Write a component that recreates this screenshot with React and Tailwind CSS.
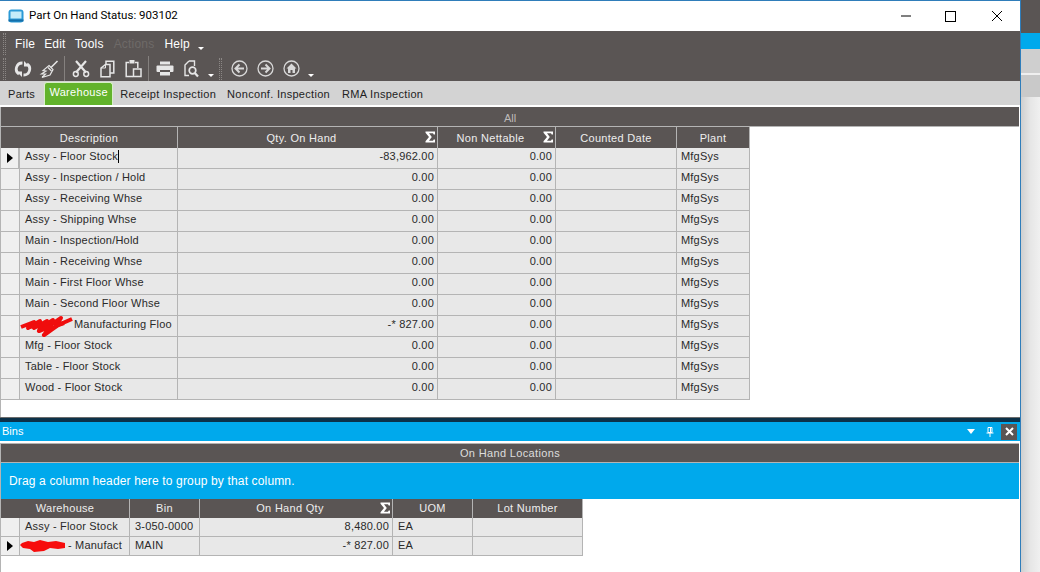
import React from "react";

const rows = [
  ["Assy - Floor Stock", "-83,962.00", true],
  ["Assy - Inspection / Hold", "0.00"],
  ["Assy - Receiving Whse", "0.00"],
  ["Assy - Shipping Whse", "0.00"],
  ["Main - Inspection/Hold", "0.00"],
  ["Main - Receiving Whse", "0.00"],
  ["Main - First Floor Whse", "0.00"],
  ["Main - Second Floor Whse", "0.00"],
  ["Manufacturing Floo", "-* 827.00", false, true],
  ["Mfg - Floor Stock", "0.00"],
  ["Table - Floor Stock", "0.00"],
  ["Wood - Floor Stock", "0.00"],
];

function Sigma() {
  return (
    <svg width="11" height="12" viewBox="0 0 11 12" className="block">
      <path d="M.5 .5H10V3.5H8.7L8 2.2H4L6.8 6L4 9.8H8L8.7 8.4H10V11.5H.5V10.3L4 6L.5 1.7Z" fill="#fff" />
    </svg>
  );
}

function Pointer() {
  return (
    <svg width="6" height="10" viewBox="0 0 6 10">
      <path d="M0 0L6 5L0 10Z" fill="#000" />
    </svg>
  );
}

function ScribbleWide() {
  return (
    <svg width="53" height="22" viewBox="0 0 53 22" className="block shrink-0">
      <path d="M1 12L14 7L8 13L20 6L14 13L27 6L22 12L33 5L28 12L41 3L36 11L52 4" fill="none" stroke="#f00d0d" strokeWidth="4" strokeLinejoin="round" />
      <path d="M8 12L21 10L19 16L31 11L24 20L38 10L44 8" fill="none" stroke="#f00d0d" strokeWidth="4.2" strokeLinejoin="round" />
    </svg>
  );
}

function ScribbleBlob() {
  return (
    <svg width="46" height="15" viewBox="0 0 46 15" className="block shrink-0">
      <path d="M2 5L8 3L14 4L20 2L28 4L36 3L45 5L45 10L38 11L30 10L24 13L14 14L10 11L3 10L0 7Z" fill="#f70c0c" />
    </svg>
  );
}

function HeaderCell({ w, children, sigma, sigmaTop = "top-[4px]", first }) {
  return (
    <div className={`relative flex h-full shrink-0 items-center justify-center border-r border-[#b4b4b4] ${w} ${sigma ? "pr-[12px]" : ""} ${first ? "pt-[2px]" : ""}`}>
      <span>{children}</span>
      {sigma && <span className={`absolute right-[1px] ${sigmaTop}`}><Sigma /></span>}
    </div>
  );
}

function ToolIcon({ children }) {
  return <span className="flex w-[26px] justify-center">{children}</span>;
}

function Caret({ mt, ml }) {
  return (
    <svg width="6" height="3" viewBox="0 0 6 3" className={`block shrink-0 ${mt} ${ml}`}>
      <path d="M0 0H6L3 3Z" fill="#fff" />
    </svg>
  );
}

function Grip({ className = "mr-[3px]" }) {
  return <span className={`h-[22px] w-[3px] shrink-0 border-x border-dotted border-[#8b8785] ${className}`} />;
}

function Divider() {
  return <span className="ml-[2px] mr-[3px] h-[26px] w-px shrink-0 bg-[#85817f]" />;
}

const C = "#e6e6e6";

function IconRefresh() {
  return (
    <svg width="18" height="18" viewBox="0 0 18 18" fill="none">
      <path d="M8.5 3A6 6 0 0 0 5 14" stroke={C} strokeWidth="2.8" />
      <path d="M9.5 15A6 6 0 0 0 13 4" stroke={C} strokeWidth="2.8" />
      <path d="M2.5 11.5H8V17Z" fill={C} />
      <path d="M15.5 6.5H10V1Z" fill={C} />
    </svg>
  );
}
function IconBroom() {
  return (
    <svg width="20" height="20" viewBox="0 0 20 20" fill="none" stroke={C} strokeWidth="1.2">
      <path d="M18.5 2L12 8.5" strokeWidth="1.6" />
      <path d="M10 6.5L14 10.5L11 16L3 18.5L6.5 15L2.5 15L7 12L4 11.5Z" />
      <path d="M9 8.5L12.5 12" />
    </svg>
  );
}
function IconScissors() {
  return (
    <svg width="18" height="18" viewBox="0 0 18 18" fill="none" stroke={C}>
      <path d="M4 1L14 12.5M14 1L4 12.5" strokeWidth="2.2" />
      <circle cx="3.8" cy="14" r="2.4" strokeWidth="1.5" />
      <circle cx="14.2" cy="14" r="2.4" strokeWidth="1.5" />
    </svg>
  );
}
function IconCopy() {
  return (
    <svg width="15" height="18" viewBox="0 0 15 18" fill="none" stroke={C} strokeWidth="1.5">
      <path d="M6 4.5V1.2H13.8V13H10" />
      <path d="M1 8L5.5 4.5H10V16.8H1Z" />
      <path d="M5.5 4.5V8H1" strokeWidth="1" />
    </svg>
  );
}
function IconPaste() {
  return (
    <svg width="17" height="19" viewBox="0 0 17 19" fill="none" stroke={C} strokeWidth="1.5">
      <path d="M4 3.5H1.2V17.5H8" />
      <path d="M10 3.5H12.8V9" />
      <rect x="4.5" y="1" width="5" height="3.5" fill={C} stroke="none" />
      <rect x="8.5" y="10" width="7.5" height="7.5" />
    </svg>
  );
}
function IconPrinter() {
  return (
    <svg width="18" height="15" viewBox="0 0 18 15">
      <rect x="4" y="0.5" width="10" height="3" fill={C} />
      <rect x="0.5" y="4.5" width="17" height="6.5" rx="1" fill={C} />
      <rect x="4" y="9" width="10" height="2" fill="#5a5554" />
      <rect x="4" y="11" width="10" height="3.5" fill={C} />
    </svg>
  );
}
function IconPreview() {
  return (
    <svg width="15" height="18" viewBox="0 0 15 18" fill="none" stroke={C}>
      <path d="M5 1H10.5V6M5 1L1 5V15.5H5" strokeWidth="1.4" />
      <circle cx="8.5" cy="10.5" r="3.3" strokeWidth="1.7" />
      <path d="M10.8 13L14 16.5" strokeWidth="2.2" />
    </svg>
  );
}
function IconBack() {
  return (
    <svg width="17" height="17" viewBox="0 0 17 17" fill="none" stroke="#d8d8d8">
      <circle cx="8.5" cy="8.5" r="7.5" strokeWidth="1.3" />
      <path d="M13 8.5H5M8.5 4.5L4.5 8.5L8.5 12.5" strokeWidth="2" />
    </svg>
  );
}
function IconForward() {
  return (
    <svg width="17" height="17" viewBox="0 0 17 17" fill="none" stroke="#d8d8d8">
      <circle cx="8.5" cy="8.5" r="7.5" strokeWidth="1.3" />
      <path d="M4 8.5H12M8.5 4.5L12.5 8.5L8.5 12.5" strokeWidth="2" />
    </svg>
  );
}
function IconHome() {
  return (
    <svg width="17" height="17" viewBox="0 0 17 17">
      <circle cx="8.5" cy="8.5" r="7.5" fill="none" stroke="#d8d8d8" strokeWidth="1.3" />
      <path d="M8.5 3.5L13.5 8.5H12V13H5V8.5H3.5Z" fill="#d8d8d8" />
      <rect x="7.5" y="10" width="2" height="3" fill="#5a5554" />
    </svg>
  );
}

export default function App() {
  return (
    <div className="flex h-[572px] w-[1040px] overflow-hidden bg-white font-['Liberation_Sans',Arial,sans-serif] text-[11px] text-[#2a2a2a]">
      <div className="flex h-full w-[1021px] shrink-0 flex-col border-r border-t border-[#2f7dba]">
        <div className="flex h-[30px] shrink-0 items-center bg-white pl-[8px]">
          <svg width="16" height="14" viewBox="0 0 16 14">
            <rect x="0.5" y="0.5" width="15" height="13" rx="3" fill="#2b9ad6" />
            <rect x="2.5" y="2.5" width="11" height="7" fill="#c4ecf9" />
            <rect x="0.5" y="10.5" width="15" height="2" fill="#156fa9" />
          </svg>
          <span className="ml-[5px] font-['Roboto',sans-serif] text-[11.5px] text-black">Part On Hand Status: 903102</span>
          <div className="ml-auto flex items-center">
            <svg width="12" height="12" viewBox="0 0 12 12" className="mr-[33px]"><path d="M1 6H11" stroke="#000" /></svg>
            <svg width="11" height="11" viewBox="0 0 11 11" className="mr-[35px]"><rect x="0.5" y="0.5" width="10" height="10" fill="none" stroke="#000" /></svg>
            <svg width="12" height="12" viewBox="0 0 12 12" className="mr-[17px]"><path d="M1 1L11 11M11 1L1 11" stroke="#000" /></svg>
          </div>
        </div>

        <div className="h-[50px] shrink-0 bg-[#5a5554]">
          <div className="flex h-[25px] items-center pl-[3px] pt-[1px] text-[12px] tracking-[0.2px] text-white">
            <Grip />
            <span className="ml-[6px]">File</span>
            <span className="ml-[9px]">Edit</span>
            <span className="ml-[9px]">Tools</span>
            <span className="ml-[10px] text-[#6e6a68]">Actions</span>
            <span className="ml-[10px]">Help</span>
            <Caret mt="mt-[9px]" ml="ml-[8px]" />
          </div>
          <div className="flex h-[25px] items-center pl-[3px]">
            <Grip />
            <div className="ml-[1px] flex items-center">
              <ToolIcon><IconRefresh /></ToolIcon>
              <ToolIcon><IconBroom /></ToolIcon>
            </div>
            <Divider />
            <ToolIcon><IconScissors /></ToolIcon>
            <ToolIcon><IconCopy /></ToolIcon>
            <ToolIcon><IconPaste /></ToolIcon>
            <Divider />
            <ToolIcon><IconPrinter /></ToolIcon>
            <ToolIcon><IconPreview /></ToolIcon>
            <Caret mt="mt-[13px]" ml="ml-[4px]" />
            <Grip className="ml-[5px] mr-[4px]" />
            <ToolIcon><IconBack /></ToolIcon>
            <ToolIcon><IconForward /></ToolIcon>
            <ToolIcon><IconHome /></ToolIcon>
            <Caret mt="mt-[13px]" ml="ml-[4px]" />
          </div>
        </div>

        <div className="flex h-[24px] shrink-0 items-center bg-[#d3d3d3] tracking-[0.3px] text-[#222]">
          <span className="ml-[8px] pt-[3px]">Parts</span>
          <span className="ml-[9px] mt-[1px] flex h-[23px] w-[69px] items-center justify-center rounded-t-[3px] border border-b-0 border-[#d8efc9] bg-[#62b32b] pb-[3px] text-white">Warehouse</span>
          <span className="ml-[7px] pt-[3px]">Receipt Inspection</span>
          <span className="ml-[11px] pt-[3px]">Nonconf. Inspection</span>
          <span className="ml-[12px] pt-[3px]">RMA Inspection</span>
        </div>

        <div className="h-[2px] shrink-0 bg-white" />

        <div className="flex min-h-0 flex-1 flex-col border-l border-[#b4b4b4]">
          <div className="mr-[1px] flex h-[20px] shrink-0 items-center justify-center border-b border-[#b4b4b4] bg-[#5a5554] pt-[3px] text-[#bdbab9]">All</div>
          <div className="w-[749px] tracking-[0.2px]">
            <div className="flex h-[21px] bg-[#5a5554] tracking-[0.3px] text-[#eee]">
              <HeaderCell w="w-[177px]" first>Description</HeaderCell>
              <HeaderCell w="w-[260px]" sigma first>Qty. On Hand</HeaderCell>
              <HeaderCell w="w-[118px]" sigma first>Non Nettable</HeaderCell>
              <HeaderCell w="w-[121px]" first>Counted Date</HeaderCell>
              <HeaderCell w="w-[73px]" first>Plant</HeaderCell>
            </div>
            {rows.map(([desc, qty, first, red]) => (
              <div key={desc} className="flex h-[21px] border-b border-[#b4b4b4] bg-[#e8e8e8]">
                <div className={`flex w-[19px] shrink-0 items-center justify-center border-[#b4b4b4] bg-[#efefef] ${first ? "border-r-2" : "border-r"}`}>{first && <Pointer />}</div>
                <div className="flex w-[158px] shrink-0 items-center whitespace-nowrap border-r border-[#b4b4b4] pb-[4px] pl-[5px]">
                  {red && <span className="-ml-[5px] mr-[1px] mt-[3px]"><ScribbleWide /></span>}
                  <span>{desc}</span>
                  {first && <span className="ml-[0px] h-[13px] w-px bg-black" />}
                </div>
                <div className="flex w-[260px] shrink-0 items-center justify-end border-r border-[#b4b4b4] pb-[4px] pr-[3px]">{qty}</div>
                <div className="flex w-[118px] shrink-0 items-center justify-end border-r border-[#b4b4b4] pb-[4px] pr-[3px]">0.00</div>
                <div className="w-[121px] shrink-0 border-r border-[#b4b4b4]" />
                <div className="flex w-[73px] shrink-0 items-center border-r border-[#b4b4b4] pb-[4px] pl-[4px]">MfgSys</div>
              </div>
            ))}
          </div>
        </div>

        <div className="h-[5px] shrink-0 border-t border-[#6b6b6b] bg-[#0c3149]" />

        <div className="flex h-[19px] shrink-0 items-center bg-[#00a9ec] pl-[2px] text-white">
          <span>Bins</span>
          <div className="ml-auto flex items-center">
            <svg width="8" height="5" viewBox="0 0 8 5" className="mr-[11px]"><path d="M0 0H8L4 5Z" fill="#fff" /></svg>
            <svg width="8" height="10" viewBox="0 0 8 10" className="mr-[7px]"><path d="M2 .5H6V5.5H2ZM.5 6H7.5M4 6V10M4.5 1V5" stroke="#fff" fill="none" /></svg>
            <span className="mr-[3px] flex h-[16px] w-[16px] items-center justify-center bg-[#5a5554]">
              <svg width="9" height="9" viewBox="0 0 9 9"><path d="M1 1L8 8M8 1L1 8" stroke="#fff" strokeWidth="2" /></svg>
            </span>
          </div>
        </div>
        <div className="h-[2px] shrink-0 bg-white" />

        <div className="flex shrink-0 flex-col border-l border-[#b4b4b4]">
          <div className="mr-[1px] flex h-[20px] items-center justify-center border-y border-[#b4b4b4] bg-[#5a5554] tracking-[0.35px] text-[#ddd]">On Hand Locations</div>
          <div className="mr-[1px] flex h-[36px] items-center bg-[#00a9ec] pl-[8px] text-[12px] tracking-[0.15px] text-white">Drag a column header here to group by that column.</div>
          <div className="w-[582px] tracking-[0.2px]">
            <div className="flex h-[19px] bg-[#5a5554] tracking-[0.3px] text-[#eee]">
              <HeaderCell w="w-[129px]">Warehouse</HeaderCell>
              <HeaderCell w="w-[70px]">Bin</HeaderCell>
              <HeaderCell w="w-[193px]" sigma sigmaTop="top-[3px]">On Hand Qty</HeaderCell>
              <HeaderCell w="w-[80px]">UOM</HeaderCell>
              <HeaderCell w="w-[110px]">Lot Number</HeaderCell>
            </div>
            {[
              ["Assy - Floor Stock", "3-050-0000", "8,480.00", false],
              ["- Manufact", "MAIN", "-* 827.00", true],
            ].map(([wh, bin, qty, sel]) => (
              <div key={bin} className="flex h-[19px] border-b border-[#b4b4b4] bg-[#e8e8e8]">
                <div className="flex w-[19px] shrink-0 items-center justify-center border-r border-[#b4b4b4] bg-[#efefef]">{sel && <Pointer />}</div>
                <div className="flex w-[110px] shrink-0 items-center whitespace-nowrap border-r border-[#b4b4b4] pb-[2px] pl-[5px]">
                  {sel && <span className="-ml-[5px] mr-[2px] mt-[1px]"><ScribbleBlob /></span>}
                  {wh}
                </div>
                <div className="flex w-[70px] shrink-0 items-center border-r border-[#b4b4b4] pb-[2px] pl-[5px]">{bin}</div>
                <div className="flex w-[193px] shrink-0 items-center justify-end border-r border-[#b4b4b4] pb-[2px] pr-[3px]">{qty}</div>
                <div className="flex w-[80px] shrink-0 items-center border-r border-[#b4b4b4] pb-[2px] pl-[5px]">EA</div>
                <div className="w-[110px] shrink-0 border-r border-[#b4b4b4]" />
              </div>
            ))}
          </div>
          <div className="h-[16px]" />
        </div>
      </div>

      <div className="flex flex-1 flex-col">
        <div className="h-[33px] bg-[#5a5554]" />
        <div className="h-[16px] bg-[#00a9ec]" />
        <div className="h-[24px] bg-[#cfcfcf]" />
        <div className="h-[2px] bg-[#efefef]" />
        <div className="h-[22px] bg-[#c9c9c9]" />
        <div className="flex-1 bg-gradient-to-r from-[#cfcfcf] via-[#e6e6e6] to-[#f0f0f0]" />
      </div>
    </div>
  );
}
